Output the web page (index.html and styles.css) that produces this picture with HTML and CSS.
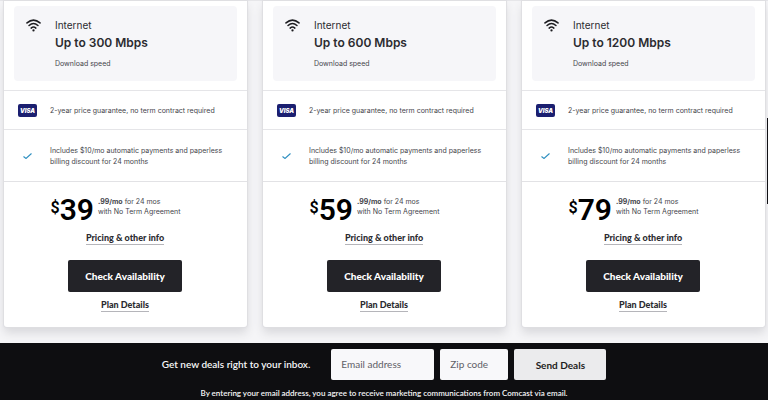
FILE: index.html
```
<!DOCTYPE html>
<html lang="en">
<head>
<meta charset="utf-8">
<meta name="viewport" content="width=device-width, initial-scale=1">
<title>Internet plans</title>
<link rel="stylesheet" href="styles.css">
</head>
<body>
<svg class="defs" width="0" height="0" aria-hidden="true">
  <symbol id="wifi" viewBox="0 0 28 25">
    <path d="M1.500 7.500Q14-3 26.500 7.500M5.500 12.500Q14 5 22.500 12.500M9.500 17.500Q14 13.500 18.500 17.500" fill="none" stroke="currentColor" stroke-width="3" stroke-linecap="round"/>
    <circle cx="14" cy="22" r="2.200" fill="currentColor"/>
  </symbol>
  <symbol id="check" viewBox="0 0 18 12">
    <path d="M1 7l5 4L17 1" fill="none" stroke="currentColor" stroke-width="2.200"/>
  </symbol>
</svg>
<main class="plans">
  <article class="card">
    <div class="speed">
      <svg class="wifi"><use href="#wifi"/></svg>
      <div>
        <p class="kind">Internet</p>
        <h2>Up to 300 Mbps</h2>
        <p class="note">Download speed</p>
      </div>
    </div>
    <div class="perk"><span class="visa">VISA</span><p>2-year price guarantee, no term contract required</p></div>
    <div class="perk tall"><svg class="check"><use href="#check"/></svg><p>Includes $10/mo automatic payments and paperless<br>billing discount for 24 months</p></div>
    <div class="offer">
      <div class="price"><span class="dollar">$</span><span class="amount">39</span><p class="terms"><b>.99/mo</b> for 24 mos<br>with No Term Agreement</p></div>
      <a class="info" href="#">Pricing &amp; other info</a>
      <button class="buy" type="button">Check Availability</button>
      <a class="details" href="#">Plan Details</a>
    </div>
  </article>
  <article class="card">
    <div class="speed">
      <svg class="wifi"><use href="#wifi"/></svg>
      <div>
        <p class="kind">Internet</p>
        <h2>Up to 600 Mbps</h2>
        <p class="note">Download speed</p>
      </div>
    </div>
    <div class="perk"><span class="visa">VISA</span><p>2-year price guarantee, no term contract required</p></div>
    <div class="perk tall"><svg class="check"><use href="#check"/></svg><p>Includes $10/mo automatic payments and paperless<br>billing discount for 24 months</p></div>
    <div class="offer">
      <div class="price"><span class="dollar">$</span><span class="amount">59</span><p class="terms"><b>.99/mo</b> for 24 mos<br>with No Term Agreement</p></div>
      <a class="info" href="#">Pricing &amp; other info</a>
      <button class="buy" type="button">Check Availability</button>
      <a class="details" href="#">Plan Details</a>
    </div>
  </article>
  <article class="card">
    <div class="speed">
      <svg class="wifi"><use href="#wifi"/></svg>
      <div>
        <p class="kind">Internet</p>
        <h2>Up to 1200 Mbps</h2>
        <p class="note">Download speed</p>
      </div>
    </div>
    <div class="perk"><span class="visa">VISA</span><p>2-year price guarantee, no term contract required</p></div>
    <div class="perk tall"><svg class="check"><use href="#check"/></svg><p>Includes $10/mo automatic payments and paperless<br>billing discount for 24 months</p></div>
    <div class="offer">
      <div class="price"><span class="dollar">$</span><span class="amount">79</span><p class="terms"><b>.99/mo</b> for 24 mos<br>with No Term Agreement</p></div>
      <a class="info" href="#">Pricing &amp; other info</a>
      <button class="buy" type="button">Check Availability</button>
      <a class="details" href="#">Plan Details</a>
    </div>
  </article>
</main>
<div class="side-tab"></div>
<footer class="signup">
  <form class="form">
    <label for="email">Get new deals right to your inbox.</label>
    <input id="email" class="email" type="email" placeholder="Email address">
    <input class="zip" type="text" placeholder="Zip code" aria-label="Zip code">
    <button class="send" type="button">Send Deals</button>
  </form>
  <p class="legal">By entering your email address, you agree to receive marketing communications from Comcast via email.</p>
</footer>
</body>
</html>
```
FILE: styles.css
```
* { box-sizing: border-box; }
body {
  margin: 0;
  min-height: 100vh;
  display: flex;
  flex-direction: column;
  overflow-x: hidden;
  background: #f5f5f7;
  color: #2b2b30;
  font-family: Inter, "Liberation Sans", sans-serif;
}
p, h2 { margin: 0; }
.defs { position: absolute; }
.plans {
  display: grid;
  grid-template-columns: repeat(3, 1fr);
  gap: 16px;
  padding: 0 3px 16px 4px;
  border-top: 1px solid #e6e6e9;
}
.card {
  background: #fff;
  border-radius: 0 0 3px 3px;
  box-shadow: 0 0 1px 1px #dedee2, 0 6px 10px #d8d8dc;
}
.speed {
  display: flex;
  gap: 14px;
  margin: 5px 10px 9px;
  padding: 12px 12px 11px;
  border-radius: 4px;
  background: #f6f6f9;
}
.wifi { width: 15px; height: 13px; margin-top: 1px; color: #1d1d21; }
.kind { font-size: 10px; line-height: 14px; }
.speed h2 { font-size: 12px; line-height: 22px; font-weight: 600; }
.note { margin-top: 3px; font-size: 7px; line-height: 13px; color: #45454b; }
.perk {
  display: flex;
  align-items: center;
  height: 39px;
  padding-left: 14px;
  border-top: 1px solid #e5e5e8;
  font-size: 7px;
  line-height: 11px;
  color: #45454b;
  white-space: nowrap;
}
.perk.tall { height: 52px; }
.visa {
  width: 19px;
  height: 13px;
  margin-right: 13px;
  border-radius: 2px;
  background: #1b1f70;
  color: #fff;
  font-size: 6px;
  font-weight: 900;
  font-style: italic;
  line-height: 13px;
  text-align: center;
}
.check { width: 9px; height: 6px; margin: 1px 18px 0 5px; color: #2d8fc0; }
.offer {
  display: flex;
  flex-direction: column;
  align-items: center;
  padding: 13px 0 15px;
  border-top: 1px solid #e2e2e5;
}
.price { display: flex; align-items: flex-start; margin-right: 20px; color: #000; font-family: Roboto, sans-serif; font-weight: 600; }
.dollar { font-size: 16px; line-height: 26px; }
.amount { font-size: 30px; line-height: 30px; }
.terms { margin-left: 4px; font: 7px/10px Inter, sans-serif; color: #45454b; padding-top: 2px; white-space: nowrap; }
.info, .details { color: #2b2b30; font: 900 9px/12px Lato, sans-serif; text-decoration: none; border-bottom: 1px solid #b5b5ba; }
.info { margin-top: 7px; }
.info, .buy, .details { margin-right: 1px; }
.buy, .send { border: 0; border-radius: 2px; white-space: nowrap; }
.buy { width: 114px; height: 32px; margin-top: 15px; margin-bottom: 7px; background: #232328; color: #fff; font: 900 10px/14px Lato, sans-serif; }
.side-tab { position: absolute; right: 0; top: 118px; width: 1px; height: 86px; background: #101014; }
.signup { flex: 1; padding-top: 6px; background: #0e0e11; color: #f6f6f8; font-family: Lato, sans-serif; }
.form { display: flex; justify-content: center; align-items: center; gap: 6px; }
.form label { margin-right: 15px; padding-bottom: 2px; font-size: 10px; line-height: 14px; font-weight: 600; }
.form input { height: 31px; padding: 0 10px 2px; border: 0; border-radius: 2px; background: #f8f8fa; color: #55555b; font: 10px/14px Lato, sans-serif; }
.form input::placeholder { color: #606066; opacity: 1; }
.form .email { width: 103px; }
.form .zip { width: 68px; }
.send { width: 92px; height: 31px; background: #ebebed; color: #1d1d21; font: 700 10px/14px Lato, sans-serif; }
.legal { margin-top: 7px; font-size: 8px; line-height: 12px; font-weight: 600; text-align: center; }
```
